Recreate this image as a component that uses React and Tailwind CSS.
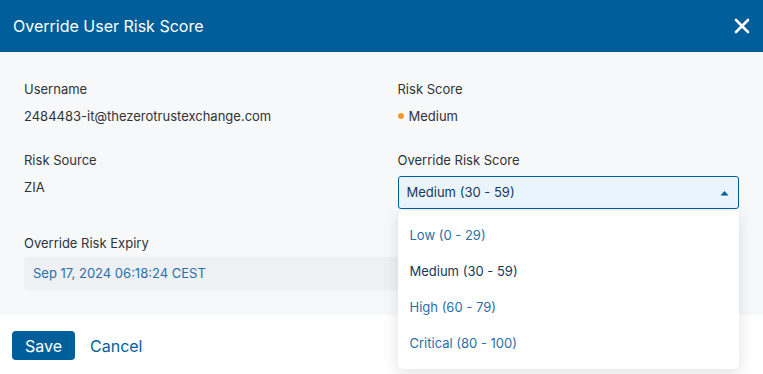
import React from "react";

const options = [
  { label: "Low (0 - 29)", selected: false },
  { label: "Medium (30 - 59)", selected: true },
  { label: "High (60 - 79)", selected: false },
  { label: "Critical (80 - 100)", selected: false },
];

const Field = ({ label, gap = "mb-[7px]", children }) => (
  <div className="flex flex-col">
    <div className={`text-[13px] leading-5 text-[#2f3338] ${gap}`}>{label}</div>
    {children}
  </div>
);

const App = () => {
  return (
    <div className="w-[763px] h-[374px] bg-white font-['Inter',sans-serif] overflow-hidden flex flex-col">
      <header className="h-[52px] bg-[#005f9b] flex items-center justify-between pl-[13px] pr-[13px] shrink-0">
        <h1 className="text-[16px] text-white">Override User Risk Score</h1>
        <svg width="16" height="16" viewBox="0 0 16 16" className="text-white">
          <path d="M2 2 L14 14 M14 2 L2 14" stroke="currentColor" strokeWidth="2.6" strokeLinecap="round" />
        </svg>
      </header>

      <main className="bg-[#f7f8fa] px-6 pt-[27px] pb-[25px] grid grid-cols-2 gap-x-8 gap-y-6">
        <Field label="Username">
          <div className="text-[13px] leading-5 text-[#2f3338]">2484483-it@thezerotrustexchange.com</div>
        </Field>
        <Field label="Risk Score">
          <div className="text-[13px] leading-5 text-[#2f3338] flex items-center gap-[5px]">
            <span className="w-[6px] h-[6px] rounded-full bg-[#f39a2b]" />
            Medium
          </div>
        </Field>
        <Field label="Risk Source">
          <div className="text-[13px] leading-5 text-[#2f3338]">ZIA</div>
        </Field>
        <Field label="Override Risk Score" gap="mb-[6px]">
          <div className="relative">
            <div className="h-[33px] border border-[#005f9b] rounded-[3px] bg-[#eaf4fd] flex items-center justify-between pl-2 pr-[8px]">
              <span className="text-[13px] text-[#12395c]">Medium (30 - 59)</span>
              <svg width="9" height="6" viewBox="0 0 9 6" className="mr-[1px]">
                <path d="M0.5 5.5 L4.5 1 L8.5 5.5 Z" fill="#005f9b" />
              </svg>
            </div>
            <ul className="absolute z-10 left-0 right-0 top-[35px] bg-white rounded-[5px] shadow-[0_4px_16px_rgba(0,0,0,0.12)] pt-[7px] pb-[7px]">
              {options.map((o) => (
                <li
                  key={o.label}
                  className={`h-9 flex items-center px-3 text-[13px] ${o.selected ? "text-[#12395c]" : "text-[#2a6fa8]"}`}
                >
                  {o.label}
                </li>
              ))}
            </ul>
          </div>
        </Field>
        <div className="col-span-2">
          <Field label="Override Risk Expiry" gap="mb-[4px]">
            <div className="h-[33px] bg-[#eef0f3] rounded-[3px] flex items-center px-[9px] text-[13px] text-[#2a6fa8]">
              Sep 17, 2024 06:18:24 CEST
            </div>
          </Field>
        </div>
      </main>

      <footer className="flex items-center pl-3 pt-4 gap-[15px]">
        <button className="h-[29px] w-[63px] bg-[#005f9b] text-white text-[16px] rounded-[4px]">Save</button>
        <button className="text-[16px] text-[#005f9b]">Cancel</button>
      </footer>
    </div>
  );
};

export default App;
